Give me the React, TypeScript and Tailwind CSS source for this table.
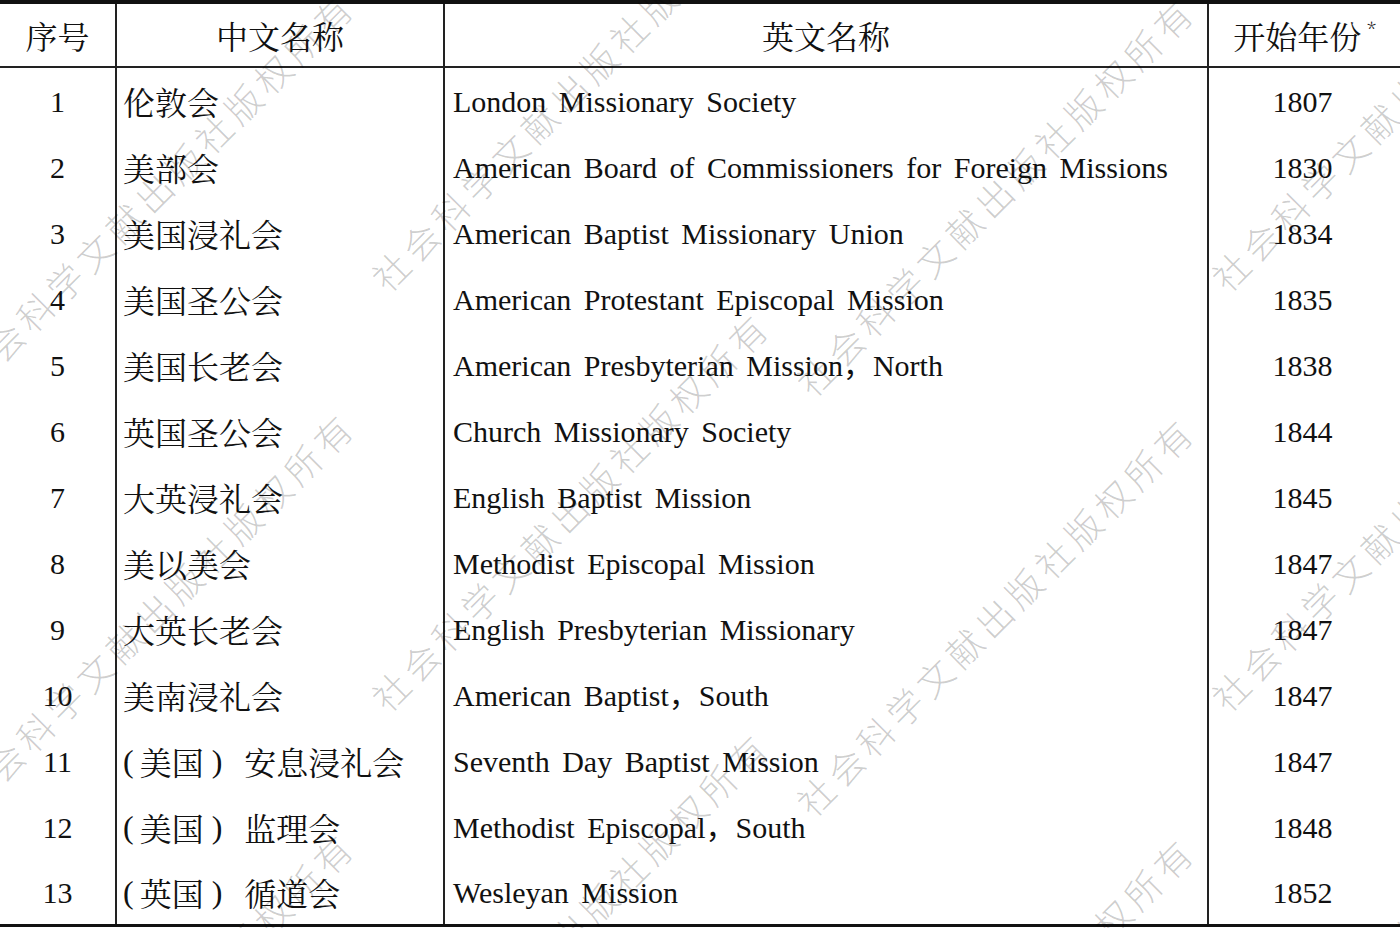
// App.tsx
type Row = { no: number; zh: string; tag?: string; en: string; year: number };

const rows: Row[] = [
  { no: 1, zh: "伦敦会", en: "London Missionary Society", year: 1807 },
  { no: 2, zh: "美部会", en: "American Board of Commissioners for Foreign Missions", year: 1830 },
  { no: 3, zh: "美国浸礼会", en: "American Baptist Missionary Union", year: 1834 },
  { no: 4, zh: "美国圣公会", en: "American Protestant Episcopal Mission", year: 1835 },
  { no: 5, zh: "美国长老会", en: "American Presbyterian Mission，North", year: 1838 },
  { no: 6, zh: "英国圣公会", en: "Church Missionary Society", year: 1844 },
  { no: 7, zh: "大英浸礼会", en: "English Baptist Mission", year: 1845 },
  { no: 8, zh: "美以美会", en: "Methodist Episcopal Mission", year: 1847 },
  { no: 9, zh: "大英长老会", en: "English Presbyterian Missionary", year: 1847 },
  { no: 10, zh: "美南浸礼会", en: "American Baptist，South", year: 1847 },
  { no: 11, tag: "美国", zh: "安息浸礼会", en: "Seventh Day Baptist Mission", year: 1847 },
  { no: 12, tag: "美国", zh: "监理会", en: "Methodist Episcopal，South", year: 1848 },
  { no: 13, tag: "英国", zh: "循道会", en: "Wesleyan Mission", year: 1852 },
];

const cjk = "font-['Noto_Serif_CJK_SC','Noto_Sans_CJK_SC',serif]";
const latin = "font-['Liberation_Serif','Noto_Sans_CJK_SC',serif]";
const mark =
  "pointer-events-none absolute origin-left -rotate-45 whitespace-nowrap font-['Noto_Sans_CJK_SC',sans-serif] font-light text-[36px] leading-[36px] tracking-[6px] text-black/20";
const wm = "社会科学文献出版社版权所有";

export default function App() {
  return (
    <div className="relative h-[928px] w-[1400px] overflow-hidden bg-white text-[#111]">
      <div className="border-t-4 border-b-[3px] border-[#111]">
        {/* header */}
        <div className={`grid h-[64px] grid-cols-[115px_328px_764px_193px] border-b-2 border-[#222] text-[32px] ${cjk}`}>
          <div className="flex items-center justify-center">序号</div>
          <div className="flex items-center justify-center border-l-2 border-[#222]">中文名称</div>
          <div className="flex items-center justify-center border-l-2 border-[#222]">英文名称</div>
          <div className="flex items-center justify-center border-l-2 border-[#222]">
            开始年份
            <span className="ml-[6px] -mt-[14px] text-[18px] leading-none">*</span>
          </div>
        </div>

        {rows.map((r, i) => (
          <div
            key={r.no}
            className={`grid grid-cols-[115px_328px_764px_193px] ${i === rows.length - 1 ? "h-[64px]" : "h-[66px]"}`}
          >
            <div className={`flex items-center justify-center text-[30px] ${latin}`}>{r.no}</div>
            <div className={`flex items-center border-l-2 border-[#222] pl-[6px] text-[32px] ${cjk}`}>
              {r.tag && (
                <>
                  <span className={`mr-[6px] ${latin}`}>(</span>
                  {r.tag}
                  <span className={`ml-[8px] mr-[22px] ${latin}`}>)</span>
                </>
              )}
              {r.zh}
            </div>
            <div className={`flex items-center whitespace-nowrap border-l-2 border-[#222] pl-2 text-[30px] [word-spacing:5px] ${latin}`}>
              {r.en}
            </div>
            <div className={`flex items-center justify-center border-l-2 border-[#222] pr-1 text-[30px] ${latin}`}>
              {r.year}
            </div>
          </div>
        ))}
      </div>

      {/* watermark */}
      <span className={`${mark} left-[-38px] top-[365px]`}>{wm}</span>
      <span className={`${mark} left-[-38px] top-[785px]`}>{wm}</span>
      <span className={`${mark} left-[-38px] top-[1205px]`}>{wm}</span>
      <span className={`${mark} left-[377px] top-[265px]`}>{wm}</span>
      <span className={`${mark} left-[377px] top-[685px]`}>{wm}</span>
      <span className={`${mark} left-[377px] top-[1105px]`}>{wm}</span>
      <span className={`${mark} left-[802px] top-[370px]`}>{wm}</span>
      <span className={`${mark} left-[802px] top-[790px]`}>{wm}</span>
      <span className={`${mark} left-[802px] top-[1210px]`}>{wm}</span>
      <span className={`${mark} left-[1217px] top-[265px]`}>{wm}</span>
      <span className={`${mark} left-[1217px] top-[685px]`}>{wm}</span>
      <span className={`${mark} left-[1217px] top-[1105px]`}>{wm}</span>
    </div>
  );
}
